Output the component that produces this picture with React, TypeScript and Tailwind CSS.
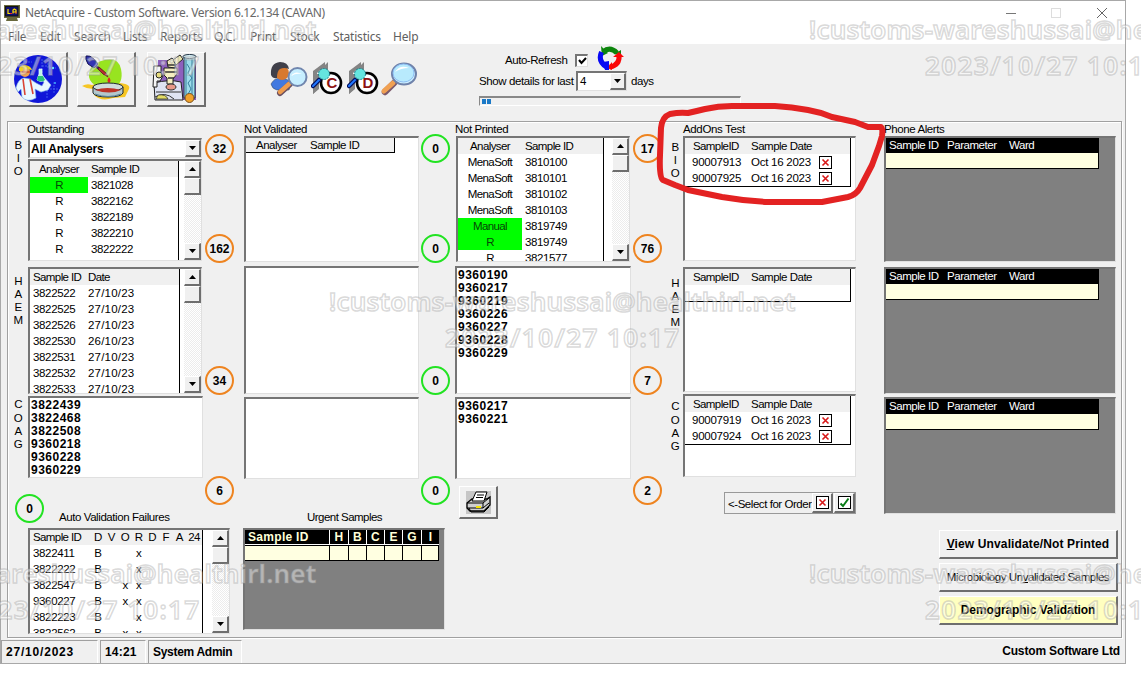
import React from "react";

type Kids = { children?: React.ReactNode };

const sunken =
  "border-t-2 border-l-2 border-r border-b border-t-[#757575] border-l-[#757575] border-r-[#e0e0e0] border-b-[#e0e0e0]";
const raised =
  "border-t border-l border-r-2 border-b-2 border-t-white border-l-white border-r-[#6e6e6e] border-b-[#6e6e6e] bg-[#f0f0f0]";

function Box({ className = "", children }: Kids & { className?: string }) {
  return <div className={`${sunken} flex shrink-0 overflow-hidden ${className}`}>{children}</div>;
}

function Count({ value, green, className = "" }: { value: string; green?: boolean; className?: string }) {
  return (
    <div
      className={`flex h-[29px] w-[29px] shrink-0 items-center justify-center rounded-full border-2 text-[12px] font-bold tracking-[0px] ${
        green ? "border-[#22e322]" : "border-[#ee8420]"
      } ${className}`}
    >
      {value}
    </div>
  );
}

function Arrow({ down }: { down?: boolean }) {
  return (
    <svg width="7" height="4" viewBox="0 0 7 4" className="shrink-0">
      <path d={down ? "M0 0h7L3.5 4z" : "M0 4h7L3.5 0z"} fill="#000" />
    </svg>
  );
}

function ScrollBar() {
  return (
    <div className="flex w-[17px] shrink-0 flex-col bg-[repeating-conic-gradient(#ffffff_0_25%,#ececec_0_50%)] bg-[length:2px_2px]">
      <div className={`flex h-[17px] items-center justify-center ${raised}`}>
        <Arrow />
      </div>
      <div className={`h-[17px] ${raised}`} />
      <div className="flex-1" />
      <div className={`flex h-[17px] items-center justify-center ${raised}`}>
        <Arrow down />
      </div>
    </div>
  );
}

function Letters({ text, className = "" }: { text: string; className?: string }) {
  return (
    <div className={`flex w-[10px] shrink-0 flex-col items-center ${className}`}>
      {text.split("").map((c, i) => (
        <span key={i} className="h-[13.2px] leading-[13px]">
          {c}
        </span>
      ))}
    </div>
  );
}

function AnalyserRows({ rows, first, pad }: { rows: [string, string, boolean][]; first: string; pad: string }) {
  return (
    <>
      <div className="flex h-4 bg-[#f0f0f0]">
        <span className={`${first} text-center`}>Analyser</span>
        <span className={pad}>Sample ID</span>
      </div>
      {rows.map(([a, b, hot], i) => (
        <div key={i} className="flex h-4">
          <span className={`${first} text-center ${hot ? "bg-[#00ff00] text-[#064806]" : ""}`}>{a}</span>
          <span className={`tracking-[-0.4px] ${pad}`}>{b}</span>
        </div>
      ))}
    </>
  );
}

function Cross() {
  return (
    <svg width="13" height="13" viewBox="0 0 13 13" className="shrink-0">
      <rect x=".5" y=".5" width="12" height="12" fill="#fff" stroke="#000" />
      <path d="M3.500 3.500l6 6M9.500 3.500l-6 6" stroke="#d81818" strokeWidth="1.600" />
    </svg>
  );
}

function AddOns({ rows, className }: { rows: string[]; className: string }) {
  return (
    <Box className={`w-[173px] bg-white ${className}`}>
      <div className="flex w-[166px] flex-col self-start border-r border-b border-black">
        <div className="flex h-4 bg-[#f0f0f0] pl-2">
          <span className="w-[58px]">SampleID</span>
          <span className="tracking-[-0.5px]">Sample Date</span>
        </div>
        {rows.map((r, i) => (
          <div key={i} className="flex h-4 items-center pl-[7px] tracking-[-0.25px]">
            <span className="w-[59px]">{r}</span>
            <span className="w-[68px]">{r && "Oct 16 2023"}</span>
            {r && <Cross />}
          </div>
        ))}
      </div>
    </Box>
  );
}

function PhoneGrid({ className }: { className: string }) {
  return (
    <Box className={`w-[232px] bg-[#808080] ${className}`}>
      <div className="-mt-px flex w-[213px] flex-col self-start border-r border-b border-black">
        <div className="flex h-4 bg-black pl-[3px] tracking-[-0.45px] text-white">
          <span className="w-[58px]">Sample ID</span>
          <span className="w-[62px]">Parameter</span>
          <span>Ward</span>
        </div>
        <div className="h-[15px] bg-[#ffffe1]" />
      </div>
    </Box>
  );
}

function BoldList({ items }: { items: string[] }) {
  return (
    <div className="flex flex-col pt-px pl-[1px] text-[12px] font-bold tracking-[0.5px]">
      {items.map((s) => (
        <span key={s} className="h-[13px] leading-[13px]">
          {s}
        </span>
      ))}
    </div>
  );
}

function AppIcon() {
  return (
    <svg width="16" height="16" viewBox="0 0 16 16">
      <path d="M0 0h16v13H0zM3 13h10l1 3H2z" fill="#68683c" />
      <rect x="1.500" y="1.500" width="12.500" height="9.500" fill="#10106a" stroke="#111" />
      <path d="M4 4v4.500h3M9 8.500V5l1.300-1L12 5v3.500M9 7h3" fill="none" stroke="#ffe000" strokeWidth="1.200" />
      <path d="M6 8.500h2M12 7v1.500" stroke="#f03030" />
    </svg>
  );
}

function ScientistIcon() {
  return (
    <svg width="50" height="50" viewBox="0 0 50 50">
      <circle cx="25" cy="25" r="24" fill="#1016d8" />
      <path d="M29 5v14M35 6v8h8M29 12h8M31 35h14M34 30v14M41 28v11M12 8h7" stroke="#4b6cf0" strokeWidth=".8" fill="none" strokeDasharray="2 1" />
      <path d="M3 34q2-9 8-10l6 1 6 4 6 3 2-4-4-4 3-2 8 9-3 5-7 2-6-3 1 9q-9 5-14-1l-1-8-3 3z" fill="#e9f8ff" stroke="#7fb6e8" strokeWidth=".6" />
      <path d="M10 25l2 16M17 25l3 15" stroke="#d84434" strokeWidth="1.600" />
      <circle cx="12" cy="18" r="5" fill="#f2a050" />
      <path d="M6 17q-1-6 6-6 6 1 7 5l-6-1-4 2z" fill="#f2d21c" />
      <path d="M9 18h8" stroke="#d04a30" strokeWidth="1.600" />
      <path d="M26 15h3v5l3 6q-4 3-8 0l2-6z" fill="#bff4e8" stroke="#eaffff" strokeWidth=".7" />
      <path d="M25 22h5l2 4q-4 3-8 0z" fill="#2cc27c" />
      <circle cx="40" cy="14" r="1.200" fill="#60e8ff" />
      <circle cx="42" cy="29" r="1" fill="#3fa8ff" />
    </svg>
  );
}

function PetriIcon() {
  return (
    <svg width="50" height="48" viewBox="0 0 50 48">
      <path d="M1 31q5-3 10-1 12-5 27-2 12 1 10 6-2 4-4 8l-12 1q-12 4-19-3-2-4-1-6-6 0-11-3z" fill="#f6c624" />
      <path d="M20 6q17-6 20 8 3 15-8 19l-18-3q-7-4-6-12 2-9 12-12z" fill="#98e420" />
      <path d="M15 11l9 8" stroke="#1e1e6c" strokeWidth="2.500" />
      <path d="M5 1q4-1 8 3l4 5-4 4-6-4q-3-5-2-8z" fill="#3434b4" stroke="#141452" />
      <path d="M18 12l7 6 2 4-5-3-5-5z" fill="#b83030" stroke="#551414" strokeWidth=".6" />
      <path d="M28 22q3 4 0 6-3-2 0-6" fill="#e02424" />
      <path d="M12 32v6q2 4 15 4t15-4v-6" fill="#b4c8cc" stroke="#202830" />
      <ellipse cx="27" cy="32" rx="15" ry="4" fill="#d0dddd" stroke="#202830" />
      <path d="M14 35q12-4 26 0-11 5-26 0" fill="#bd3428" />
      <path d="M14 39q13 5 26 0" stroke="#568699" fill="none" />
    </svg>
  );
}

function MicroscopeIcon() {
  return (
    <svg width="48" height="50" viewBox="0 0 48 50">
      <path d="M6 6h38v40H6z" fill="#8d60bd" />
      <path d="M2 29q15-4 27-1l2 18H3z" fill="#dfe4f3" stroke="#222" />
      <path d="M4 38h25M3 43q10-6 19 2" fill="none" stroke="#333" />
      <path d="M15 7l5-3 4 4-1 6-7-1zM12 14h13v6l-4 5v5h-6v-6l-3-3z" fill="#f5eec0" stroke="#222" />
      <path d="M13 18h12M16 24h6M15 11h8" stroke="#333" strokeWidth="1.500" />
      <path d="M21 6l7-5 3 4-7 6z" fill="#ece6b0" stroke="#222" />
      <path d="M2 12h7v6l2 4-3 5H5v6H1z" fill="#f5f5f5" stroke="#222" />
      <circle cx="7" cy="21" r="3" fill="#e7dc80" stroke="#222" />
      <ellipse cx="19" cy="33" rx="5" ry="3" fill="#e89888" stroke="#333" />
      <path d="M6 41q8-1 10 4H4z" fill="#e3dc64" stroke="#222" strokeWidth=".7" />
      <path d="M32 2h11v42H32z" fill="#9edcea" stroke="#234" />
      <path d="M34 5v36M40 5v36M35 10l3 5-2 4 4 5-4 5 3 6-3 5" stroke="#367f9e" fill="none" />
      <ellipse cx="37.500" cy="2.500" rx="6.500" ry="2" fill="#d6eff5" stroke="#234" />
      <circle cx="37.500" cy="44" r="4.500" fill="#f1a22a" stroke="#775020" />
    </svg>
  );
}

function PersonSearchIcon() {
  return (
    <svg width="38" height="35" viewBox="0 0 38 35">
      <path d="M1 22q3-6 10-6 9 1 10 6l-2 6H7q-5-1-6-6z" fill="#4179e0" stroke="#345" strokeWidth=".5" />
      <circle cx="12" cy="11" r="7" fill="#d8792f" />
      <path d="M1 13Q0 1 10 0q8 0 9 7-5-2-9 0-3 2-3 9-4 1-6-3z" fill="#40404a" />
      <path d="M20 22L10 31" stroke="#6b5060" strokeWidth="6" strokeLinecap="round" />
      <path d="M19 22L10 30" stroke="#ee9c4e" strokeWidth="4.500" strokeLinecap="round" />
      <circle cx="27.500" cy="15" r="9" fill="#c6eeff" stroke="#7186ae" strokeWidth="2" />
      <path d="M21 14q4-6 11-2-6-1-11 2" fill="#fff" />
    </svg>
  );
}

function LetterSearchIcon({ letter }: { letter: string }) {
  return (
    <svg width="32" height="34" viewBox="0 0 32 34">
      <path d="M2 9L14 0v4L6 11v17l-4 4zM8 9l9-9v8z" fill="#848484" />
      <path d="M2 12h6v15l-6 5z" fill="#848484" />
      <circle cx="20" cy="21" r="10" fill="#fff" stroke="#000" strokeWidth="2.600" />
      <text x="20.500" y="26" textAnchor="middle" fontFamily="Liberation Sans, sans-serif" fontWeight="700" fontSize="15" fill="#8c1212">
        {letter}
      </text>
      <path d="M2 24l6-6" stroke="#001060" strokeWidth="4.500" strokeLinecap="round" />
      <path d="M2 24l6-6" stroke="#2078ff" strokeWidth="2" strokeLinecap="round" />
      <circle cx="13" cy="12" r="5.500" fill="#65e5df" stroke="#187f8c" strokeDasharray="2 1" />
    </svg>
  );
}

function SearchIcon() {
  return (
    <svg width="38" height="35" viewBox="0 0 38 35">
      <path d="M14 21L5 30" stroke="#7c586a" strokeWidth="6.500" strokeLinecap="round" />
      <path d="M13 21L4 29" stroke="#f0a052" strokeWidth="5" strokeLinecap="round" />
      <ellipse cx="24" cy="12" rx="12" ry="10.500" fill="#cceeff" stroke="#6f82aa" strokeWidth="2" />
      <ellipse cx="23.500" cy="11" rx="10.500" ry="9" fill="#b8eafd" stroke="#8dbef4" />
      <path d="M15 10q5-8 14-4-8 0-14 4" fill="#fff" />
    </svg>
  );
}

function RefreshIcon() {
  return (
    <svg width="27" height="26" viewBox="0 0 27 26">
      <path d="M6 7q7-6 14 1" fill="none" stroke="#0c850c" strokeWidth="5" />
      <path d="M4 1l1 10 6-3zM17 9h7V5z" fill="#0c850c" />
      <path d="M22 10q1 10-9 12" fill="none" stroke="#fa0808" strokeWidth="5" />
      <path d="M16 12l6-5 5 5zM15 17v8l-5-2z" fill="#fa0808" />
      <path d="M4.500 7q-4 9 5 15" fill="none" stroke="#0808f4" strokeWidth="5" />
      <path d="M6 17l6-1v9H8z" fill="#0808f4" />
    </svg>
  );
}

function PrinterIcon() {
  return (
    <svg width="25" height="23" viewBox="0 0 25 23">
      <path d="M0 0h25v23H0z" fill="#c6c6c6" />
      <path d="M1 12l5-4h15l3-2v8l-6 6H4l-3-3z" fill="#d0d0d0" stroke="#000" strokeWidth="1.300" />
      <path d="M6 10L10 1h11l-3 9z" fill="#fff" stroke="#000" />
      <path d="M11 4h7M10 6.500h7M1 12h16v5H1M17 12l6-5M17 17l6-5M3 17l2 4h13l5-5" fill="none" stroke="#000" />
      <path d="M10 15h5v2h-5z" fill="#f4e400" />
    </svg>
  );
}

function ToolButton({ children }: Kids) {
  return <div className={`flex h-[55px] w-[59px] shrink-0 items-center justify-center ${raised}`}>{children}</div>;
}

function Watermark({ date, className }: { date: string; className: string }) {
  return (
    <div
      className={`pointer-events-none absolute z-20 font-['Noto_Sans','Open_Sans',sans-serif] text-[26px] leading-[36px] font-semibold whitespace-nowrap text-white/45 [-webkit-text-stroke:1.5px_rgba(150,150,150,0.36)] ${className}`}
    >
      <div className="tracking-[0.2px]">!customs-wareshussai@healthirl.net</div>
      <div className={`tracking-[1.4px] ${date}`}>2023/10/27 10:17</div>
    </div>
  );
}

const menu: [string, string][] = [
  ["File", "w-[32px]"],
  ["Edit", "w-[34px]"],
  ["Search", "w-[49px]"],
  ["Lists", "w-[37px]"],
  ["Reports", "w-[54px]"],
  ["Q.C.", "w-[36px]"],
  ["Print", "w-[40px]"],
  ["Stock", "w-[43px]"],
  ["Statistics", "w-[60px]"],
  ["Help", "w-[40px]"],
];

const haem: [string, string][] = [
  ["3822522", "27/10/23"],
  ["3822525", "27/10/23"],
  ["3822526", "27/10/23"],
  ["3822530", "26/10/23"],
  ["3822531", "27/10/23"],
  ["3822532", "27/10/23"],
  ["3822533", "27/10/23"],
];

const failures: [string, boolean][] = [
  ["3822411", false],
  ["3822222", false],
  ["3822547", true],
  ["9360227", true],
  ["3822223", false],
  ["3822562", true],
];

const urgentCols: [string, string][] = [
  ["H", "w-[19px]"],
  ["B", "w-[18px]"],
  ["C", "w-[18px]"],
  ["E", "w-[18px]"],
  ["G", "w-[19px]"],
  ["I", "w-[18px]"],
];

export default function App() {
  return (
    <div className="relative h-[679px] w-[1141px] overflow-hidden bg-white font-['Liberation_Sans',Arial,sans-serif] text-[11.5px] leading-4 tracking-[-0.6px] whitespace-nowrap text-black">
      <div className="flex h-[664px] w-[1126px] flex-col border border-[#a8a8a8] bg-[#f0f0f0]">
        <div className="flex h-[24px] shrink-0 items-center bg-white pl-[3px] font-['Noto_Sans','Open_Sans',sans-serif] text-[12px] tracking-[-0.33px] text-[#686868]">
          <AppIcon />
          <span className="ml-[5px] flex-1">NetAcquire - Custom Software. Version 6.12.134 (CAVAN)</span>
          <svg width="104" height="12" viewBox="0 0 104 12" className="mr-[17px]" fill="none">
            <path d="M2 6.500h10" stroke="#777" />
            <rect x="47.500" y="1.500" width="9" height="9" stroke="#ddd" />
            <path d="M93 1l10 10M103 1L93 11" stroke="#666" />
          </svg>
        </div>
        <div className="flex h-[19px] shrink-0 items-center bg-white pt-[4px] pl-[7px] font-['Noto_Sans','Open_Sans',sans-serif] text-[12px] leading-[15px] tracking-[-0.2px] text-[#606060]">
          {menu.map(([m, w]) => (
            <span key={m} className={w}>
              {m}
            </span>
          ))}
        </div>

        <div className="flex h-[77px] shrink-0 items-start pl-2">
          <div className="flex pt-[8px]">
            <ToolButton>
              <ScientistIcon />
            </ToolButton>
            <div className="ml-[9px]">
              <ToolButton>
                <PetriIcon />
              </ToolButton>
            </div>
            <div className="mr-px ml-[11px]">
              <ToolButton>
                <MicroscopeIcon />
              </ToolButton>
            </div>
          </div>
          <div className="ml-[63px] flex pt-[18px]">
            <PersonSearchIcon />
            <div className="ml-[3px]">
              <LetterSearchIcon letter="C" />
            </div>
            <div className="ml-[4px]">
              <LetterSearchIcon letter="D" />
            </div>
            <div className="ml-[1px]">
              <SearchIcon />
            </div>
          </div>
          <div className="ml-[61px] flex w-[264px] flex-col pt-px">
            <div className="flex h-[26px] items-start pl-[26px]">
              <span className="mt-[7px] w-[70px] tracking-[-0.45px]">Auto-Refresh</span>
              <div className={`mt-[9px] flex h-[13px] w-[13px] items-center justify-center bg-white ${sunken}`}>
                <svg width="9" height="8" viewBox="0 0 9 8" className="shrink-0">
                  <path d="M1 3l2.500 3L8 1" fill="none" stroke="#000" strokeWidth="2" />
                </svg>
              </div>
              <div className="ml-[9px]">
                <RefreshIcon />
              </div>
            </div>
            <div className="flex h-[20px] items-center">
              <span className="w-[97px] tracking-[-0.4px]">Show details for last</span>
              <div className={`flex h-[20px] w-[51px] bg-white pl-[2px] ${sunken}`}>
                <span className="flex-1">4</span>
                <div className={`flex w-[16px] items-center justify-center ${raised}`}>
                  <Arrow down />
                </div>
              </div>
              <span className="ml-[4px] tracking-[-0.4px]">days</span>
            </div>
            <div className="mt-[5px] flex h-[10px] w-[262px] gap-px border-t-2 border-r border-b border-l border-t-[#888] border-r-white border-b-white border-l-[#888] p-px pl-[2px]">
              <div className="w-1 bg-[#1b79c7]" />
              <div className="w-1 bg-[#1b79c7]" />
            </div>
          </div>
        </div>

        <div className="ml-[6px] flex h-[517px] w-[1115px] shrink-0 border border-[#a0a0a0] shadow-[inset_1px_1px_0_#fff,1px_1px_0_#fff]">
          <div className="flex w-[659px] shrink-0 flex-col">
            <div className="flex h-[406px] shrink-0">
              <div className="flex w-[20px] shrink-0 flex-col">
                <Letters text="BIO" className="mt-[17px] ml-[5px]" />
                <Letters text="HAEM" className="mt-[96px] ml-[5px]" />
                <Letters text="COAG" className="mt-[71px] ml-[5px]" />
                <Count value="0" green className="mt-[43px] ml-[7px]" />
              </div>

              <div className="flex w-[175px] shrink-0 flex-col">
                <span className="-ml-px h-4 leading-[14px] tracking-[-0.45px]">Outstanding</span>
                <div className={`flex h-[20px] w-[174px] bg-white pl-[1px] ${sunken}`}>
                  <span className="flex-1 text-[12px] leading-[18px] font-bold tracking-[-0.25px]">All Analysers</span>
                  <div className={`flex w-[16px] items-center justify-center ${raised}`}>
                    <Arrow down />
                  </div>
                </div>
                <Box className="mt-px h-[102px] w-[174px] bg-white">
                  <div className="w-[149px] shrink-0 border-r border-black">
                    <AnalyserRows
                      first="w-[58px]"
                      pad="pl-[3px]"
                      rows={[
                        ["R", "3821028", true],
                        ["R", "3822162", false],
                        ["R", "3822189", false],
                        ["R", "3822210", false],
                        ["R", "3822222", false],
                      ]}
                    />
                  </div>
                  <div className="w-[5px]" />
                  <ScrollBar />
                </Box>
                <Box className="mt-[6px] h-[127px] w-[174px] bg-white">
                  <div className="w-[150px] shrink-0 border-r border-black">
                    <div className="flex h-4 bg-[#f0f0f0] pl-[3px]">
                      <span className="w-[55px]">Sample ID</span>
                      <span>Date</span>
                    </div>
                    {haem.map(([a, b]) => (
                      <div key={a} className="flex h-4 pl-[3px]">
                        <span className="w-[55px] tracking-[-0.35px]">{a}</span>
                        <span className="tracking-[0.2px]">{b}</span>
                      </div>
                    ))}
                  </div>
                  <div className="w-[4px]" />
                  <ScrollBar />
                </Box>
                <Box className="mt-[2px] h-[82px] w-[175px] bg-white">
                  <BoldList items={["3822439", "3822468", "3822508", "9360218", "9360228", "9360229"]} />
                </Box>
                <span className="mt-[31px] pl-[31px] tracking-[-0.42px]">Auto Validation Failures</span>
              </div>

              <div className="flex w-[41px] shrink-0 flex-col pl-[2px]">
                <Count value="32" className="mt-[12px]" />
                <Count value="162" className="mt-[71px]" />
                <Count value="34" className="mt-[103px]" />
                <Count value="6" className="mt-[81px]" />
              </div>

              <div className="flex w-[175px] shrink-0 flex-col">
                <span className="h-[14px] leading-[14px] tracking-[-0.4px]">Not Validated</span>
                <Box className="h-[126px] w-[175px] bg-white">
                  <div className="flex h-[15px] w-[149px] border-r border-b border-black bg-[#f0f0f0] pl-[10px] leading-[14px] tracking-[-0.5px]">
                    <span className="w-[54px]">Analyser</span>
                    <span>Sample ID</span>
                  </div>
                </Box>
                <Box className="mt-[4px] h-[128px] w-[175px] bg-white" />
                <Box className="mt-[3px] h-[82px] w-[175px] bg-white" />
                <span className="mt-[30px] pl-[63px] tracking-[-0.53px]">Urgent Samples</span>
              </div>

              <div className="flex w-[36px] shrink-0 flex-col pl-[2px]">
                <Count value="0" green className="mt-[12px]" />
                <Count value="0" green className="mt-[71px]" />
                <Count value="0" green className="mt-[103px]" />
                <Count value="0" green className="mt-[81px]" />
              </div>

              <div className="flex w-[176px] shrink-0 flex-col">
                <span className="h-[14px] leading-[14px] tracking-[-0.4px]">Not Printed</span>
                <Box className="ml-px h-[126px] w-[174px] bg-white">
                  <div className="w-[146px] shrink-0 border-r border-black">
                    <AnalyserRows
                      first="w-[64px]"
                      pad="pl-[3px]"
                      rows={[
                        ["MenaSoft", "3810100", false],
                        ["MenaSoft", "3810101", false],
                        ["MenaSoft", "3810102", false],
                        ["MenaSoft", "3810103", false],
                        ["Manual", "3819749", true],
                        ["R", "3819749", true],
                        ["R", "3821577", false],
                      ]}
                    />
                  </div>
                  <div className="w-[8px]" />
                  <ScrollBar />
                </Box>
                <Box className="mt-[4px] h-[128px] w-[176px] bg-white">
                  <BoldList items={["9360190", "9360217", "9360219", "9360226", "9360227", "9360228", "9360229"]} />
                </Box>
                <Box className="mt-[3px] h-[82px] w-[176px] bg-white">
                  <BoldList items={["9360217", "9360221"]} />
                </Box>
                <div className={`mt-[7px] ml-1 flex h-[33px] w-[39px] items-center justify-center ${raised}`}>
                  <PrinterIcon />
                </div>
              </div>

              <div className="flex w-[36px] shrink-0 flex-col pl-[2px]">
                <Count value="17" className="mt-[12px]" />
                <Count value="76" className="mt-[71px]" />
                <Count value="7" className="mt-[103px]" />
                <Count value="2" className="mt-[81px]" />
              </div>
            </div>

            <div className="flex">
              <Box className="ml-[20px] h-[106px] w-[202px] bg-white">
                <div className="-mt-px w-[173px] shrink-0 border-r border-black">
                  <div className="flex h-4 bg-[#f0f0f0] pl-[3px]">
                    <span className="w-[58px]">Sample ID</span>
                    {["D", "V", "O", "R", "D", "F", "A"].map((c, i) => (
                      <span key={i} className="w-[13.6px] text-center">
                        {c}
                      </span>
                    ))}
                    <span className="pl-[2px]">24</span>
                  </div>
                  {failures.map(([id, o]) => (
                    <div key={id} className="flex h-4 pl-[3px]">
                      <span className="w-[58px] tracking-[-0.35px]">{id}</span>
                      <span className="w-[13.6px] text-center">B</span>
                      <span className="w-[13.6px]" />
                      <span className="w-[13.6px] text-center">{o ? "x" : ""}</span>
                      <span className="w-[13.6px] text-center">x</span>
                    </div>
                  ))}
                </div>
                <div className="w-[9px]" />
                <ScrollBar />
              </Box>
              <Box className="ml-[13px] h-[102px] w-[202px] bg-[#808080]">
                <div className="-mt-px flex flex-col self-start text-[12px] font-bold tracking-[0.1px]">
                  <div className="flex h-[16px] border-b border-white bg-black text-[#ffffd8]">
                    <span className="w-[84px] pl-[3px] leading-[16px] tracking-[0.3px]">Sample ID</span>
                    {urgentCols.map(([c, w]) => (
                      <span key={c} className={`${w} border-l border-white text-center leading-[16px]`}>
                        {c}
                      </span>
                    ))}
                  </div>
                  <div className="flex h-[16px] border-t border-b border-black bg-[#ffffe1]">
                    <span className="w-[84px]" />
                    {urgentCols.map(([c, w]) => (
                      <span key={c} className={`${w} border-l border-black`} />
                    ))}
                    <span className="-ml-px border-r border-black" />
                  </div>
                </div>
              </Box>
            </div>
          </div>

          <div className="flex w-[217px] shrink-0">
            <div className="flex w-[16px] shrink-0 flex-col">
              <Letters text="BIO" className="mt-[19px] ml-[3px]" />
              <Letters text="HAEM" className="mt-[96px] ml-[3px]" />
              <Letters text="COAG" className="mt-[71px] ml-[3px]" />
            </div>
            <div className="flex w-[173px] shrink-0 flex-col">
              <span className="h-[14px] leading-[14px] tracking-[-0.35px]">AddOns Test</span>
              <AddOns rows={["90007913", "90007925"]} className="h-[125px]" />
              <AddOns rows={[""]} className="mt-[6px] h-[125px]" />
              <AddOns rows={["90007919", "90007924"]} className="mt-[2px] h-[83px]" />
              <div className="mt-[15px] ml-[41px] flex h-[22px] w-[132px] items-center border border-[#999]">
                <span className="w-[87px] pt-[2px] pl-[3px] tracking-[-0.45px]">&lt;-Select for Order</span>
                <div className={`flex h-[20px] w-[21px] items-center justify-center ${raised}`}>
                  <Cross />
                </div>
                <div className={`ml-px flex h-[20px] w-[21px] items-center justify-center ${raised}`}>
                  <svg width="13" height="13" viewBox="0 0 13 13" className="shrink-0">
                    <rect x=".5" y=".5" width="12" height="12" fill="#fff" stroke="#000" />
                    <path d="M2.500 7.500L5 10l5.500-7.500" fill="none" stroke="#0a7c18" strokeWidth="2" />
                  </svg>
                </div>
              </div>
            </div>
          </div>

          <div className="flex w-[236px] shrink-0 flex-col">
            <span className="h-[14px] leading-[14px] tracking-[-0.4px]">Phone Alerts</span>
            <PhoneGrid className="h-[126px]" />
            <PhoneGrid className="mt-[5px] h-[127px]" />
            <PhoneGrid className="mt-[3px] h-[117px]" />
            <div className="mt-[16px] ml-[55px] flex w-[179px] flex-col gap-1">
              <div className={`flex h-[29px] items-center justify-center text-[12px] font-bold tracking-[0.13px] ${raised}`}>
                <span>
                  <u>V</u>iew Unvalidate/Not Printed
                </span>
              </div>
              <div className={`flex h-[29px] items-center justify-center tracking-[-0.44px] ${raised}`}>
                <span>
                  Microbiology Un<u>v</u>alidated Samples
                </span>
              </div>
              <div className="flex h-[29px] items-center justify-center border-t border-r-2 border-b-2 border-l border-t-white border-r-[#6e6e6e] border-b-[#6e6e6e] border-l-white bg-[#ffffc0] text-[12px] font-bold tracking-[-0.1px]">
                Demographic Validation
              </div>
            </div>
          </div>
        </div>

        <div className="mt-[2px] flex h-[23px] shrink-0 text-[12px] leading-[22px] font-bold tracking-[0.1px]">
          <div className="w-[97px] border-t border-r border-l border-t-[#a0a0a0] border-r-white border-l-[#a0a0a0] pl-[4px] tracking-[0.8px]">27/10/2023</div>
          <div className="ml-[2px] w-[46px] border-t border-r border-l border-t-[#a0a0a0] border-r-white border-l-[#a0a0a0] pl-[4px] tracking-[0.2px]">14:21</div>
          <div className="ml-[2px] w-[94px] border-t border-r border-l border-t-[#a0a0a0] border-r-white border-l-[#a0a0a0] pl-[4px] tracking-[-0.3px]">
            System Admin
          </div>
          <div className="flex-1 pr-[5px] text-right tracking-[-0.15px]">Custom Software Ltd</div>
        </div>
      </div>

      <Watermark className="top-[11px] left-[-150px]" date="ml-[115px]" />
      <Watermark className="top-[11px] left-[809px]" date="ml-[116px]" />
      <Watermark className="top-[283px] left-[329px]" date="ml-[116px]" />
      <Watermark className="top-[555px] left-[-150px]" date="ml-[115px]" />
      <Watermark className="top-[555px] left-[809px]" date="ml-[116px]" />

      <svg className="pointer-events-none absolute top-[95px] left-[650px] z-30" width="245" height="120" viewBox="650 95 245 120">
        <path
          d="M661 128Q662 117 670 114Q680 112 688 113Q697 111 705 109Q718 106 732 106H775Q792 107 808 110Q820 112 832 117L855 122L868 127H881Q883 129 882 136L879 146L872 165L860 188Q856 195 848 197L822 202H768Q745 201 722 197L688 190L675 185L663 180Q659 178 660 155Z"
          fill="none"
          stroke="#e32222"
          strokeWidth="6"
          strokeLinejoin="round"
        />
      </svg>
    </div>
  );
}
